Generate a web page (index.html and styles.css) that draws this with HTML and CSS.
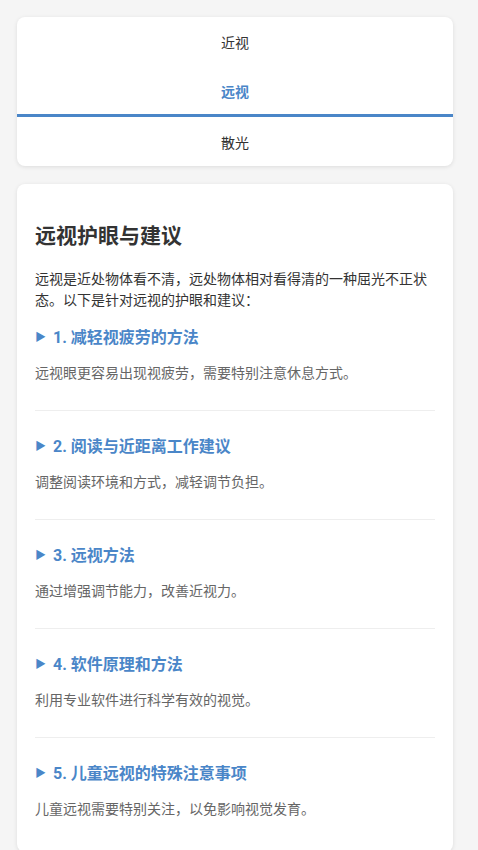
FILE: index.html
```html
<!DOCTYPE html>
<html lang="zh">
<head>
<meta charset="utf-8">
<title>远视护眼与建议</title>
<link rel="stylesheet" href="styles.css">
</head>
<body>
<div class="page">
  <nav class="tabs card">
    <div class="tab">近视</div>
    <div class="tab active">远视</div>
    <div class="tab last">散光</div>
  </nav>
  <main class="content card">
    <h2 class="title">远视护眼与建议</h2>
    <p class="intro">远视是近处物体看不清，远处物体相对看得清的一种屈光不正状态。以下是针对远视的护眼和建议：</p>
    <section class="item first">
      <h3 class="item-title"><span class="arrow">▶</span>1. 减轻视疲劳的方法</h3>
      <p class="item-desc">远视眼更容易出现视疲劳，需要特别注意休息方式。</p>
    </section>
    <section class="item">
      <h3 class="item-title"><span class="arrow">▶</span>2. 阅读与近距离工作建议</h3>
      <p class="item-desc">调整阅读环境和方式，减轻调节负担。</p>
    </section>
    <section class="item">
      <h3 class="item-title"><span class="arrow">▶</span>3. 远视方法</h3>
      <p class="item-desc">通过增强调节能力，改善近视力。</p>
    </section>
    <section class="item">
      <h3 class="item-title"><span class="arrow">▶</span>4. 软件原理和方法</h3>
      <p class="item-desc">利用专业软件进行科学有效的视觉。</p>
    </section>
    <section class="item last">
      <h3 class="item-title"><span class="arrow">▶</span>5. 儿童远视的特殊注意事项</h3>
      <p class="item-desc">儿童远视需要特别关注，以免影响视觉发育。</p>
    </section>
  </main>
</div>
</body>
</html>
```

FILE: styles.css
```css
html, body {
  margin: 0;
  padding: 0;
}
body {
  background: #f5f5f5;
  font-family: Roboto, "Noto Sans CJK SC", sans-serif;
  color: #333;
}
.page {
  padding: 17px 25px 17px 17px;
  display: flex;
  flex-direction: column;
  gap: 18px;
}
.card {
  background: #fff;
  border-radius: 8px;
  box-shadow: 0 1px 4px rgba(0, 0, 0, 0.1);
}
.tabs {
  display: flex;
  flex-direction: column;
  overflow: hidden;
}
.tab {
  height: 50px;
  display: flex;
  align-items: center;
  justify-content: center;
  font-size: 14px;
  color: #333;
  box-sizing: border-box;
}
.tab.last {
  height: 49px;
}
.tab.active {
  color: #4a86c8;
  font-weight: bold;
  border-bottom: 3px solid #4a86c8;
}
.content {
  padding: 38px 18px 6px;
}
.title {
  margin: 0 0 18px;
  font-size: 21px;
  line-height: 29px;
  font-weight: bold;
  color: #333;
}
.intro {
  margin: 0 0 14px;
  font-size: 14px;
  line-height: 21px;
  color: #333;
}
.item {
  padding: 23px 0 26px;
  border-bottom: 1px solid #eee;
}
.item.first {
  padding-top: 0;
}
.item.last {
  border-bottom: none;
}
.item-title {
  margin: 0 0 12px;
  font-size: 16px;
  line-height: 26px;
  font-weight: bold;
  color: #4a86c8;
  display: flex;
  align-items: center;
}
.arrow {
  font-size: 11px;
  margin-right: 7px;
  display: inline-block;
}
.item-desc {
  margin: 0;
  font-size: 14px;
  line-height: 21px;
  color: #666;
}
```
